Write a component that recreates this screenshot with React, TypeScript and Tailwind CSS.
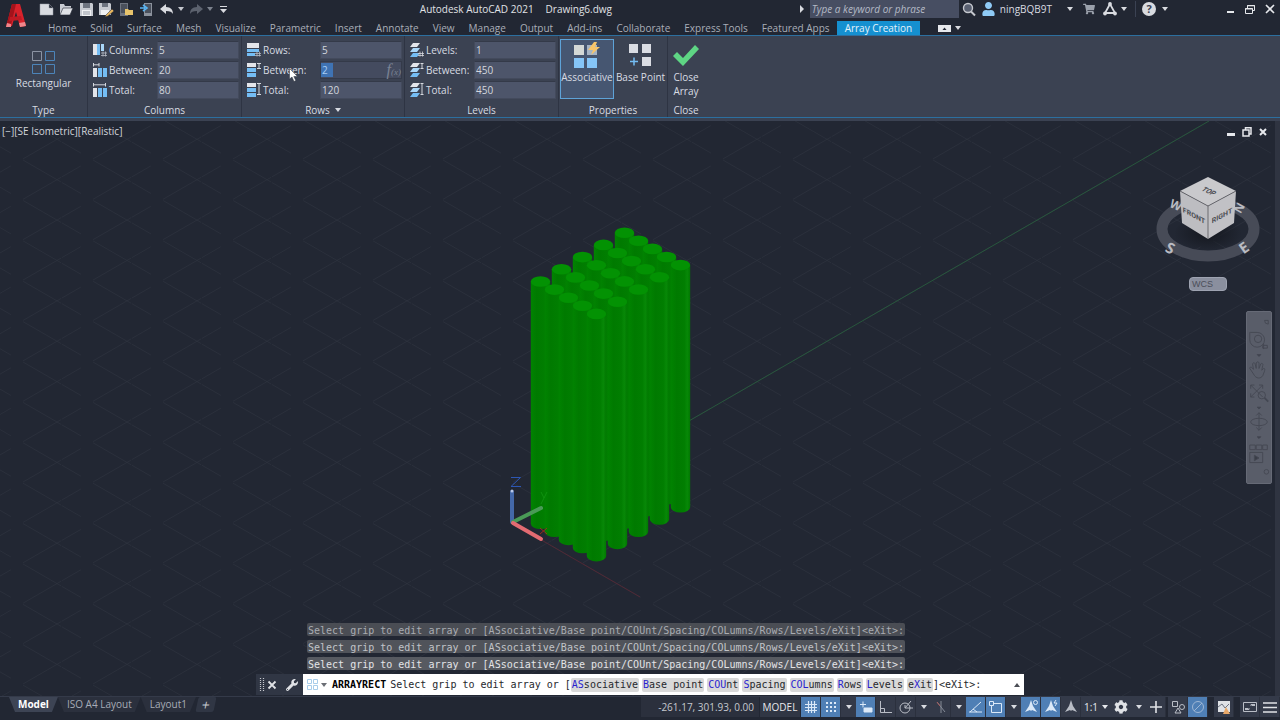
import React from 'react'
import { FaShoppingCart, FaUser, FaCog, FaWrench } from 'react-icons/fa'

const tabs = [
  'Home', 'Solid', 'Surface', 'Mesh', 'Visualize', 'Parametric', 'Insert', 'Annotate', 'View',
  'Manage', 'Output', 'Add-ins', 'Collaborate', 'Express Tools', 'Featured Apps',
]

const prompt = 'Select grip to edit array or [ASsociative/Base point/COUnt/Spacing/COLumns/Rows/Levels/eXit]<eXit>:'

const Caret = ({ className = '' }: { className?: string }) => (
  <svg viewBox="0 0 6 4" className={`h-1 w-1.5 shrink-0 ${className}`} fill="currentColor" aria-hidden="true">
    <path d="M0 0h6L3 4z" />
  </svg>
)

const Logo = () => (
  <svg viewBox="0 0 34 35" className="h-[35px] w-[34px] shrink-0" aria-hidden="true">
    <path d="M12 4h8l6 22-6 1-4-15-4 14-6 1z" fill="#d8222b" />
    <path d="M12 4h4l-5 21-5 2z" fill="#a3131b" />
    <path d="M10 17l11-1 1 4-13 1z" fill="#c01a24" />
    <path d="M6 27l1-4 4 1 0 3zM20 27l-1-4 6-1 1 4z" fill="#f0868b" />
  </svg>
)

/* quick access toolbar */

const QuickAccess = () => {
  const items = [
    {
      name: 'New',
      icon: <path d="M1 3h9l4 4v7H1z M10 3v4h4" fill="#d9dbe0" stroke="#9a9fa9" strokeWidth=".5" />,
    },
    {
      name: 'Open',
      icon: (
        <>
          <path d="M1 14V3h4l1 2h6v2" fill="#c9ccd3" />
          <path d="M4 7h10l-3 7H1z" fill="#e0e2e6" stroke="#222733" strokeWidth=".6" />
        </>
      ),
    },
    {
      name: 'Save',
      icon: (
        <>
          <path d="M1 2h12l1 1v12H1z" fill="#c6c9d0" />
          <path d="M4 2h7v5H4z" fill="#6e7480" />
          <path d="M3 9h9v6H3z" fill="#f0f1f3" />
          <path d="M4 11h7M4 13h7" stroke="#9399a4" />
        </>
      ),
    },
    {
      name: 'Save As',
      icon: (
        <>
          <path d="M0 2h11l1 1v11H0z" fill="#c6c9d0" />
          <path d="M3 2h6v4H3z" fill="#6e7480" />
          <path d="M2 9h8v5H2z" fill="#f0f1f3" />
          <path d="M7 14l6-6 2 2-6 5-3 1z" fill="#e8b75e" stroke="#222733" strokeWidth=".5" />
        </>
      ),
    },
    {
      name: 'Open from Web & Mobile',
      icon: (
        <>
          <path d="M1 2h8v13H1z" fill="#6e7480" />
          <path d="M2 3h6v9H2z" fill="#4a505c" />
          <path d="M6 8h3l1 1h4v5H6z" fill="#e8c46c" />
        </>
      ),
    },
    {
      name: 'Save to Web & Mobile',
      icon: (
        <>
          <path d="M5 2h8v13H5z" fill="#8b919c" />
          <path d="M6 3h6v9H6z" fill="#4a505c" />
          <path d="M1 7h5M4 4l4 3-4 3" fill="none" stroke="#5ab4f2" strokeWidth="1.600" />
        </>
      ),
    },
  ]
  return (
    <div className="flex items-center">
      <div className="flex gap-1">
        {items.map((item) => (
          <button key={item.name} type="button" aria-label={item.name} className="w-4">
            <svg viewBox="0 0 16 17" className="h-[17px] w-4">{item.icon}</svg>
          </button>
        ))}
      </div>
      <button type="button" aria-label="Undo" className="ml-1 w-4 text-[#d9dbe0]">
        <svg viewBox="0 0 16 17" className="h-[17px] w-4" fill="currentColor">
          <path d="M1 8l6-5v3c5 0 7 3 7 7-1-2-3-3-7-3v3z" />
        </svg>
      </button>
      <Caret className="ml-[3px] text-[#c5c8ce]" />
      <button type="button" aria-label="Redo" className="ml-1 w-4 text-[#5c626e]">
        <svg viewBox="0 0 16 17" className="h-[17px] w-4" fill="currentColor">
          <path d="M15 8L9 3v3C4 6 2 9 2 13c1-2 3-3 7-3v3z" />
        </svg>
      </button>
      <Caret className="ml-[3px] text-[#7d838e]" />
      <button type="button" aria-label="Customize" className="ml-[3px] w-4 text-[#d9dbe0]">
        <svg viewBox="0 0 16 17" className="h-[17px] w-4" fill="currentColor">
          <path d="M4 5h7v1H4zM4 8h7l-3.500 4z" />
        </svg>
      </button>
    </div>
  )
}

const InfoCenter = () => (
  <div className="flex items-center text-[#d9dbe0]">
    <svg viewBox="0 0 4 8" className="mr-1.5 h-2 w-1" fill="currentColor" aria-hidden="true">
      <path d="M0 0l4 4-4 4z" />
    </svg>
    <input
      type="text"
      aria-label="Search"
      placeholder="Type a keyword or phrase"
      className="h-[18px] w-[149px] bg-[#474e62] px-0.5 text-[10px] italic placeholder:text-[#b4bac6]"
    />
    <button type="button" aria-label="Find" className="ml-[3px] w-4">
      <svg viewBox="0 0 16 16" className="size-4" fill="none" stroke="#c5c8ce">
        <circle cx="6" cy="7" r="4.500" strokeWidth="1.400" fill="#596071" />
        <path d="M9 10.500l4 4" strokeWidth="2" />
      </svg>
    </button>
    <a href="#" className="ml-1 flex items-center gap-[5px] text-[10px]">
      <FaUser className="h-3.5 w-[13px] text-[#8fcaf5]" aria-hidden="true" />
      ningBQB9T
    </a>
    <Caret className="ml-[15px]" />
    <FaShoppingCart className="ml-[10px] size-3 text-[#9aa0ab]" aria-hidden="true" />
    <svg viewBox="0 0 14 14" className="ml-2 size-3.5" fill="none" stroke="currentColor" strokeWidth="1.800" aria-hidden="true">
      <path d="M7 2L2 11h10z" />
      <circle cx="7" cy="2" r="1" />
      <circle cx="2" cy="11.500" r="1" />
      <circle cx="12" cy="11.500" r="1" />
    </svg>
    <Caret className="ml-1" />
    <span className="mr-1.5 ml-2 h-4 w-px bg-[#3b4253]" />
    <button
      type="button"
      aria-label="Help"
      className="size-3.5 rounded-full bg-[#d9dbe0] text-center text-[11px] leading-[14px] font-bold text-[#3b4253]"
    >
      ?
    </button>
    <Caret className="ml-1.5" />
  </div>
)

const WindowButtons = () => (
  <div className="ml-[52px] flex items-center text-[#e6e8ec]">
    <button type="button" aria-label="Minimize" className="flex w-5 justify-center">
      <svg viewBox="0 0 12 12" className="size-3" fill="currentColor"><path d="M3 8h7v2H3z" /></svg>
    </button>
    <button type="button" aria-label="Restore" className="flex w-5 justify-center">
      <svg viewBox="0 0 12 12" className="size-3" fill="none" stroke="currentColor">
        <path d="M1.500 5.500h7v5h-7zM3.500 5V2.500h7v5H9M3 2.800h8M1 6h8" />
      </svg>
    </button>
    <button type="button" aria-label="Close" className="flex w-5 justify-center">
      <svg viewBox="0 0 12 12" className="size-3" fill="none" stroke="currentColor" strokeWidth="1.600">
        <path d="M2 2l8 8M10 2l-8 8" />
      </svg>
    </button>
  </div>
)

/* ribbon */

type IconKind = 'count' | 'between' | 'total'

const ColumnIcon = ({ kind }: { kind: IconKind }) => (
  <svg viewBox="0 0 14 14" className="size-3.5" aria-hidden="true">
    {kind === 'count' ? (
      <>
        <path d="M0 1h4v11H0z" fill="#e3e5ea" />
        <path d="M4 1h3v11H4z" fill="#74bdf4" />
        <path d="M8 1h3v7H8z" fill="#a9d6f8" />
        <path d="M8 10h6M8 12.500h6M10 8.500v5M12.500 8.500v5" stroke="#b5bac4" strokeWidth=".8" />
      </>
    ) : (
      <>
        <path d="M0 5h4v9H0z" fill="#e3e5ea" />
        <path d="M5 5h4v9H5zM10 5h4v9h-4z" fill="#74bdf4" />
        <path
          d={kind === 'between' ? 'M.5 0v3.500M6 0v3.500M1 1.800h5' : 'M.5 0v3.500M12.500 0v3.500M1 1.800h11'}
          stroke="#d5d8de"
          fill="none"
        />
      </>
    )}
  </svg>
)

const RowIcon = ({ kind }: { kind: IconKind }) => (
  <svg viewBox="0 0 14 14" className="size-3.5" aria-hidden="true">
    {kind === 'count' ? (
      <>
        <path d="M0 0h12v5H0z" fill="#e3e5ea" />
        <path d="M0 6h12v3H0zM0 10h8v3H0z" fill="#74bdf4" />
        <path d="M8 10.500h6M8 12.500h6M10 8.500v5M12.500 8.500v5" stroke="#b5bac4" strokeWidth=".8" />
      </>
    ) : (
      <>
        <path d="M0 0h9v4H0z" fill="#e3e5ea" />
        <path d="M0 5h9v4H0zM0 10h9v4H0z" fill="#74bdf4" />
        <path
          d={kind === 'between' ? 'M10 .5h4M10 5.500h4M12 .5v5' : 'M10 .5h4M10 11.500h4M12 .5v11'}
          stroke="#d5d8de"
          fill="none"
        />
      </>
    )}
  </svg>
)

const LevelIcon = ({ kind }: { kind: IconKind }) => (
  <svg viewBox="0 0 14 14" className="size-3.5" aria-hidden="true">
    <path d="M3 0h7L7 4H0z" fill="#e3e5ea" />
    <path d="M3 5h7L7 9H0z" fill="#a9d6f8" />
    <path d="M3 10h7l-3 4H0z" fill="#74bdf4" />
    {kind === 'count' && (
      <path d="M8 10.500h6M8 12.500h6M10 8.500v5M12.500 8.500v5" stroke="#d5d8de" strokeWidth=".8" />
    )}
    {kind === 'between' && <path d="M10.500 .5h3M10.500 5.500h3M12 .5v5" stroke="#d5d8de" />}
    {kind === 'total' && <path d="M10.500 .5h3M10.500 11.500h3M12 .5v11" stroke="#d5d8de" />}
  </svg>
)

const Panel = ({ title, children, className = '' }: { title: React.ReactNode; children: React.ReactNode; className?: string }) => (
  <section className={`flex flex-col border-r border-[#2e3443] ${className}`}>
    <div className="flex flex-1">{children}</div>
    <h2 className="flex h-3.5 items-center justify-center gap-1">{title}</h2>
  </section>
)

const inputStyle = 'h-[18px] w-[82px] border border-[#434a5c] border-t-[#343a49] bg-[#4d556a] px-px text-[10px] text-[#d3d7de]'

type Field = { label: string; value: string; icon: React.ReactNode }

const Fields = ({ id, fields, labelWidth = 'w-[50px]' }: { id: string; fields: Field[]; labelWidth?: string }) => (
  <div className="flex flex-col gap-0.5 pt-[5px] pr-0.5 pl-[5px]">
    {fields.map((field, i) => {
      const name = `${id}-${i}`
      const active = id === 'rows' && i === 1
      return (
        <div key={name} className="flex items-center">
          {field.icon}
          <label htmlFor={name} className={`pl-0.5 whitespace-nowrap ${labelWidth}`}>{field.label}</label>
          {active ? (
            <div className="flex h-[18px] w-[82px] items-center border border-[#343a49] bg-[#444b5f]">
              <input id={name} defaultValue={field.value} className="h-3.5 w-3 bg-[#3f73b3] px-px text-[10px] text-[#a9cdf5]" />
              <span className="ml-auto font-['Liberation_Serif',serif] text-[16px] leading-none text-[#7b8394] italic">
                f<span className="text-[9px]">(x)</span>
              </span>
            </div>
          ) : (
            <input id={name} defaultValue={field.value} className={inputStyle} />
          )}
        </div>
      )
    })}
  </div>
)

const kinds: IconKind[] = ['count', 'between', 'total']

const Ribbon = () => (
  <div className="flex h-[81px] bg-[#3b4252] text-[10px] text-[#d8dce3]">
    <Panel title="Type" className="w-[88px]">
      <button type="button" className="flex flex-1 flex-col items-center pt-3.5">
        <svg viewBox="0 0 26 26" className="size-[26px]" fill="none" strokeWidth="1">
          <path d="M1.500 1.500h9v9h-9z" stroke="#8b93a3" />
          <path d="M14.500 1.500h9v9h-9zM1.500 14.500h9v9h-9zM14.500 14.500h9v9h-9z" stroke="#4c84b9" />
        </svg>
        Rectangular
      </button>
    </Panel>
    <Panel title="Columns">
      <Fields
        id="columns"
        fields={['Columns:', 'Between:', 'Total:'].map((label, i) => ({
          label, value: ['5', '20', '80'][i], icon: <ColumnIcon kind={kinds[i]} />,
        }))}
      />
    </Panel>
    <Panel title={<>Rows <Caret className="ml-px" /></>}>
      <Fields
        id="rows"
        labelWidth="w-[59px]"
        fields={['Rows:', 'Between:', 'Total:'].map((label, i) => ({
          label, value: ['5', '2', '120'][i], icon: <RowIcon kind={kinds[i]} />,
        }))}
      />
    </Panel>
    <Panel title="Levels">
      <Fields
        id="levels"
        fields={['Levels:', 'Between:', 'Total:'].map((label, i) => ({
          label, value: ['1', '450', '450'][i], icon: <LevelIcon kind={kinds[i]} />,
        }))}
      />
    </Panel>
    <Panel title="Properties" className="w-[109px]">
      <button
        type="button"
        className="mt-[3px] ml-px flex h-[60px] w-[54px] flex-col items-center border border-[#5ea3d8] bg-[#465671] pt-0.5"
      >
        <svg viewBox="0 0 28 28" className="size-7" aria-hidden="true">
          <path d="M1 3h10v10H1z" fill="#d3d8d6" />
          <path d="M14 3h10v10H14z" fill="#a6b4c4" />
          <path d="M1 16h10v10H1zM14 16h10v10H14z" fill="#85c5f8" />
          <path d="M21 0l-6 8h5l-2 5 9-8h-5l2-5z" fill="#f8c569" />
        </svg>
        Associative
      </button>
      <button type="button" className="mt-[3px] flex flex-1 flex-col items-center pt-[3px]">
        <svg viewBox="0 0 28 28" className="size-7" aria-hidden="true">
          <path d="M2 2h9v9H2zM15 2h9v9h-9zM15 15h9v9h-9z" fill="#dadce3" />
          <path d="M3 19.500h8M7 15.500v8" stroke="#74bdf4" strokeWidth="1.500" />
        </svg>
        <span className="whitespace-nowrap">Base Point</span>
      </button>
    </Panel>
    <Panel title="Close" className="w-9 border-r-0">
      <button type="button" className="mt-1.5 flex flex-1 flex-col items-center">
        <svg viewBox="0 0 28 28" className="size-7" aria-hidden="true">
          <path d="M1 14l4-4 6 6L23 3l4 4-16 17z" fill="#5ed584" />
        </svg>
        <span className="leading-[14px]">Close Array</span>
      </button>
    </Panel>
  </div>
)

/* model space */

const gridLines = Array.from({ length: 50 }, (_, i) => i - 25)

const rods = [4, 3, 2, 1, 0].flatMap((b) =>
  [0, 1, 2, 3, 4].map((a) => ({ x: 540.5 + a * 14 + b * 21, y: 281.5 + a * 8.1 - b * 12.2 })),
)

const Scene = () => (
  <svg
    viewBox="0 121 1280 575"
    preserveAspectRatio="xMidYMid slice"
    className="absolute inset-0 h-full w-full"
    role="img"
    aria-label="Array of cylinders"
  >
    <defs>
      <linearGradient id="rod">
        <stop offset="0" stopColor="#018301" />
        <stop offset=".3" stopColor="#007a00" />
        <stop offset=".7" stopColor="#017e01" />
        <stop offset=".85" stopColor="#078807" />
        <stop offset="1" stopColor="#017801" />
      </linearGradient>
    </defs>
    <g stroke="#303641" strokeWidth=".6" strokeDasharray="22 14 44 0.8">
      {gridLines.map((k) => (
        <React.Fragment key={k}>
          <path d={`M${512 + k * 70 - 800} ${523 - 461.6}l1600 923.200`} />
          <path d={`M${512 + k * 70 - 800} ${523 + 461.6}l1600 -923.200`} />
        </React.Fragment>
      ))}
    </g>
    <path d="M512 523L1209 121" stroke="#28573d" strokeWidth="1" />
    <path d="M512 523L640 597" stroke="#5a2733" strokeWidth=".8" />
    {rods.map((rod) => (
      <g key={`${rod.x}-${rod.y}`}>
        <path d={`M${rod.x - 9.7} ${rod.y}v242a9.700 5.500 0 0 0 19.400 0v-242z`} fill="url(#rod)" />
        <ellipse cx={rod.x} cy={rod.y} rx="9.700" ry="5.300" fill="#039203" />
      </g>
    ))}
    <g strokeLinecap="round" strokeWidth="4">
      <path d="M512 522v-30" stroke="#4468a8" />
      <path d="M513 522l28-14" stroke="#4a9a57" />
      <path d="M513 523l28 16" stroke="#e36b72" />
    </g>
    <circle cx="512" cy="491" r="1.500" fill="#b9c9ea" />
    <path d="M511 477.500h9.500l-9.500 9h10" stroke="#2d57b4" fill="none" />
    <path d="M541 492l3 6 3-6M544 498l-3 6" stroke="#159a15" fill="none" strokeWidth=".7" />
    <path d="M540 528l7 6M547 528l-7 6" stroke="#a03018" fill="none" strokeWidth=".9" />
  </svg>
)

const ViewCube = () => (
  <svg viewBox="0 0 120 90" className="h-[90px] w-[120px]" role="img" aria-label="View cube">
    <defs>
      <radialGradient id="cubeShadow">
        <stop offset="0" stopColor="#14171e" />
        <stop offset="1" stopColor="#14171e" stopOpacity="0" />
      </radialGradient>
    </defs>
    <ellipse cx="60" cy="54" rx="46" ry="27" fill="none" stroke="#474b57" strokeWidth="11" />
    <ellipse cx="60" cy="58" rx="34" ry="18" fill="url(#cubeShadow)" />
    <g fontFamily="Open Sans, sans-serif" fontWeight="700" fill="#b9bbc2" textAnchor="middle">
      <text transform="translate(26 34) rotate(25)" fontSize="12">W</text>
      <text transform="translate(95 35) rotate(-60)" fontSize="12">N</text>
      <text transform="translate(20 78) rotate(25)" fontSize="15">S</text>
      <text transform="translate(99 77) rotate(-35)" fontSize="15">E</text>
    </g>
    <path d="M60 2l28 14-28 15-28-15z" fill="#c9c9cc" />
    <path d="M32 16l28 15v33L34 48z" fill="#bdbdc1" />
    <path d="M88 16L60 31v33l26-16z" fill="#c1c1c5" />
    <path d="M32 16l28 15 28-15M60 31v33" stroke="#55565c" strokeWidth=".8" fill="none" />
    <g fontFamily="Roboto, sans-serif" fontWeight="700" fontSize="7" fill="#4b4c52" textAnchor="middle">
      <text transform="translate(46 43) skewY(28)">FRONT</text>
      <text transform="translate(74 43) skewY(-28)">RIGHT</text>
      <text transform="translate(59 18) rotate(24) skewX(-25)">TOP</text>
    </g>
  </svg>
)

const NavBar = () => (
  <nav
    aria-label="Navigation bar"
    className="absolute top-[190px] right-2 h-[173px] w-[26px] rounded-xs border border-[#666a76] bg-[#595d69]"
  >
    <svg viewBox="0 0 26 173" className="h-full w-full" fill="none" stroke="#444853">
      <path d="M19 3l4 0 0 4-3-1z" />
      <path d="M4 16h7a8 8 0 1 1-8 8v-8z" />
      <circle cx="12" cy="23" r="4" />
      <path d="M17 30h5v3h-5zM18 28v6" />
      <path d="M11 40l4 0-2 2z" fill="#3a3e48" />
      <path d="M7 61l-4-6c0-2 2-2 4 1l-1-6c1-2 3-1 3 1l1 4 0-6c1-2 3-1 3 0v6l2-5c1-1 3 0 2 2l-1 5 2-2c2 0 1 2 1 3l-2 5c-2 3-7 4-10-2z" />
      <path d="M4 73l13 13M17 73L4 86M4 77v-4h4M13 73h4v4M4 82v4h4" />
      <circle cx="16" cy="84" r="4" />
      <path d="M19 87l4 4" strokeWidth="2" />
      <path d="M11 97l4 0-2 2z" fill="#3a3e48" />
      <path d="M13 103v19M10 106l3-3 3 3M10 119l3 3 3-3" />
      <ellipse cx="13" cy="113" rx="9" ry="4" />
      <path d="M11 129l4 0-2 2z" fill="#3a3e48" />
      <path d="M3 138h6v5H3zM10 138h6v5h-6zM17 138h5v5h-5zM3 146h14v11H3z" />
      <path d="M8 149l5 3-5 3z" fill="#3a3e48" />
      <circle cx="21" cy="167" r="2.500" />
    </svg>
  </nav>
)

const options = [
  ['', 'AS', 'sociative'],
  ['', 'B', 'ase point'],
  ['', 'COU', 'nt'],
  ['', 'S', 'pacing'],
  ['', 'COL', 'umns'],
  ['', 'R', 'ows'],
  ['', 'L', 'evels'],
  ['e', 'X', 'it'],
]

const CommandLine = () => (
  <div className="absolute right-64 bottom-px left-64 font-['DejaVu_Sans_Mono',monospace] text-[10px]">
    <div className="ml-[51px] flex flex-col items-start gap-1 pb-1">
      {['bg-[#4a4d54] text-[#a9acb2]', 'bg-[#50535a] text-[#c1c3c8]', 'bg-[#575a61] text-[#e3e4e7]'].map((tone) => (
        <p key={tone} className={`h-[13px] rounded-xs px-px leading-[15px] whitespace-pre ${tone}`}>{prompt}</p>
      ))}
    </div>
    <div className="flex h-[21px]">
      <div className="flex w-[47px] shrink-0 items-center bg-[#303644] text-[#e0e2e6]">
        <svg viewBox="0 0 6 14" className="ml-[3px] h-3.5 w-1.5" aria-hidden="true">
          <path d="M1.500 0v14M4.500 0v14" stroke="#c5c8ce" strokeDasharray="1 1" strokeWidth="1.200" />
        </svg>
        <button type="button" aria-label="Close command line" className="ml-0.5">
          <svg viewBox="0 0 10 10" className="size-2.5" stroke="currentColor" strokeWidth="1.800"><path d="M1.500 1.500l7 7M8.500 1.500l-7 7" /></svg>
        </button>
        <button type="button" aria-label="Customize" className="ml-2">
          <FaWrench className="size-3.5 p-px" aria-hidden="true" />
        </button>
      </div>
      <div className="flex flex-1 items-center bg-white text-[#26282d]">
        <svg viewBox="0 0 12 12" className="ml-1 size-3" fill="none" stroke="#a7cdea" aria-hidden="true">
          <path d="M.5 .5h4v4h-4zM6.500 .5h4v4h-4zM.5 6.500h4v4h-4zM6.500 6.500h4v4h-4z" />
        </svg>
        <Caret className="ml-0.5 text-[#6b6e75]" />
        <span className="ml-[5px] font-bold text-black">ARRAYRECT</span>
        <span className="ml-1 whitespace-pre">Select grip to edit array or [</span>
        <div className="flex gap-[3px]">
          {options.map(([pre, key, rest]) => (
            <button key={key} type="button" className="h-3.5 rounded-xs bg-[#d9d9d9] px-px leading-[14px] whitespace-pre">
              {pre}<span className="text-[#2a1fd0]">{key}</span>{rest}
            </button>
          ))}
        </div>
        <span>]&lt;eXit&gt;:</span>
        <Caret className="mr-1 ml-auto rotate-180 text-[#4b4e55]" />
      </div>
    </div>
  </div>
)

/* status bar */

const LayoutTab = ({ children, active = false }: { children: React.ReactNode; active?: boolean }) => (
  <button
    type="button"
    className={`h-[15px] px-[9px] leading-[15px] [clip-path:polygon(0_0,100%_0,calc(100%-6px)_100%,6px_100%)] ${
      active ? 'bg-[#3d4454] font-bold text-white' : 'bg-[#2b303d] text-[#a7acb7]'
    }`}
  >
    {children}
  </button>
)

const Tool = ({ label, on = false, children }: { label: string; on?: boolean; children: React.ReactNode }) => (
  <button
    type="button"
    aria-label={label}
    aria-pressed={on}
    className={`flex h-5 w-5 items-center justify-center border-r border-[#2b303d] ${on ? 'bg-[#4f7fb5] text-[#dbe9f8]' : 'bg-[#343a49] text-[#b9bdc6]'}`}
  >
    <svg viewBox="0 0 16 16" className="size-4" fill="none" stroke="currentColor">{children}</svg>
  </button>
)

const Drop = ({ label }: { label: string }) => (
  <button type="button" aria-label={label} className="flex h-5 w-[15px] items-center justify-center bg-[#343a49] text-[#d9dbe0]">
    <Caret />
  </button>
)

const person = 'M8 1l2 6 4 6-5-2-1 1-1-1-5 2 4-6z'

const StatusBar = () => (
  <footer className="flex h-6 items-start border-t border-[#343a49] bg-[#222733] text-[10px]">
    <div className="flex pl-[9px]">
      <LayoutTab active>Model</LayoutTab>
      <LayoutTab>ISO A4 Layout</LayoutTab>
      <LayoutTab>Layout1</LayoutTab>
      <button type="button" aria-label="New layout" className="ml-px h-[15px] w-[18px] -skew-x-12 rounded-xs bg-[#303644] text-[14px] leading-[14px] text-[#c5c8ce]">+</button>
    </div>
    <div className="ml-auto flex">
      <output className="h-5 w-[118px] bg-[#2b303d] pr-[5px] text-right leading-5 text-[#c5c8ce]">-261.17, 301.93, 0.00</output>
      <button type="button" className="mr-px ml-px h-5 w-10 bg-[#303644] text-[#e6e8ec]">MODEL</button>
      <Tool label="Grid" on><path d="M5.500 2v12M8.500 2v12M11.500 2v12M2 5.500h12M2 8.500h12M2 11.500h12" strokeWidth="1.200" /></Tool>
      <Tool label="Snap" on><path d="M3 4h10M3 8h10M3 12h10" strokeDasharray="2 2" strokeWidth="2" /></Tool>
      <Drop label="Snap settings" />
      <Tool label="Dynamic input" on>
        <path d="M2 5.500h6M5 2.500v6" />
        <path d="M6 9h8v4H6z" fill="currentColor" />
      </Tool>
      <Tool label="Ortho"><path d="M2.500 2v11.500H14M2.500 9.500h4v4" /></Tool>
      <Tool label="Polar"><circle cx="7" cy="9" r="5" /><path d="M7 9h8M7 9l6-7M7 9V6" /></Tool>
      <Drop label="Polar settings" />
      <Tool label="Isometric"><path d="M8 2v12M4 3l4 5M12 13L8 8" stroke="#858b97" /><path d="M4 3l3 4" stroke="#a85b5b" /></Tool>
      <Drop label="Isometric settings" />
      <Tool label="Object snap tracking" on><path d="M1 13h13M2 13L13 3M5 10l4 3" /></Tool>
      <Tool label="Object snap" on><path d="M3.500 4.500h10v9h-10z" /><path d="M1.500 2.500h4v4h-4z" fill="#4f7fb5" /></Tool>
      <Drop label="Object snap settings" />
      <Tool label="Annotation visibility" on><path d={person} fill="currentColor" stroke="none" /><circle cx="12.500" cy="3.500" r="2" /></Tool>
      <Tool label="Auto scale" on><path d={person} fill="currentColor" stroke="none" /><path d="M13 1l-2 3h3l-2 3" /></Tool>
      <Tool label="Annotation"><path d={person} fill="currentColor" stroke="none" /></Tool>
      <button type="button" className="flex h-5 w-[30px] items-center justify-center gap-1 bg-[#343a49] text-[#e6e8ec]">
        1:1 <Caret />
      </button>
      <button type="button" aria-label="Workspace" className="flex h-5 w-5 items-center justify-center bg-[#343a49] text-[#e0e2e6]">
        <FaCog className="size-3.5" aria-hidden="true" />
      </button>
      <Drop label="Workspace settings" />
      <Tool label="Annotation monitor"><path d="M8 2v12M2 8h12" stroke="#e0e2e6" strokeWidth="1.600" /></Tool>
      <span className="w-0.5" />
      <Tool label="Isolate objects"><path d="M2.500 2.500h5v5h-5zM8 9l3 5H5z" /><circle cx="12" cy="8" r="2.500" /></Tool>
      <Tool label="Hardware acceleration" on><circle cx="8" cy="8" r="5.500" stroke="#9db6d4" /><path d="M4 12l8-8" stroke="#9db6d4" /></Tool>
      <span className="w-1.5" />
      <Tool label="Graphics performance">
        <path d="M2 2h12v11H2z" fill="#dfe1e5" stroke="none" />
        <path d="M2 8l4-3 3 4 4-4" stroke="#6b7280" />
        <path d="M10 8l4 7H7z" fill="#e9a868" stroke="none" />
      </Tool>
      <span className="w-1.5" />
      <Tool label="Clean screen"><path d="M1.500 3.500h13v9h-13zM9 7V5.500h3M4 10.500h3V9" /><path d="M10 5h3v2h-3zM3 9h3v2H3z" fill="currentColor" stroke="none" /></Tool>
      <Tool label="Customization"><path d="M1 4h14M1 8.500h14M1 13h14" stroke="#e0e2e6" strokeWidth="1.600" /></Tool>
    </div>
  </footer>
)

const App = () => {
  return (
    <div className="flex min-h-screen flex-col overflow-hidden bg-[#222733] font-['Open_Sans','Noto_Sans',sans-serif]">
      <header>
        <div className="flex border-b border-[#2c6f9f]">
          <Logo />
          <div className="min-w-0 flex-1">
            <div className="flex h-[18px] items-center">
              <div className="pl-[5px]"><QuickAccess /></div>
              <h1 className="flex flex-1 justify-center gap-3 text-[10px] text-[#e0e2e6]">
                <span>Autodesk AutoCAD 2021</span>
                <span>Drawing6.dwg</span>
              </h1>
              <InfoCenter />
              <WindowButtons />
            </div>
            <div className="flex h-[17px] items-end pl-[7px] text-[10px] text-[#a9aeb8]">
              {tabs.map((tab) => (
                <button key={tab} type="button" className="h-3.5 px-[7px] leading-[14px] whitespace-nowrap">{tab}</button>
              ))}
              <button type="button" className="h-3.5 bg-[#1590d0] px-2 leading-[14px] whitespace-nowrap text-[#e6f3fb]">
                Array Creation
              </button>
              <button type="button" aria-label="Minimize ribbon" className="ml-[18px] flex h-3.5 items-center gap-1 text-[#d9dbe0]">
                <svg viewBox="0 0 13 7" className="h-[7px] w-[13px]">
                  <path d="M0 0h13v7H0z" fill="#e6e8ec" />
                  <path d="M4.500 5l2-2.500 2 2.500z" fill="#222733" />
                </svg>
                <Caret />
              </button>
            </div>
          </div>
        </div>
        <div className="relative">
          <Ribbon />
          <svg viewBox="0 0 10 14" className="absolute top-8 left-[289px] h-3.5 w-2.5" aria-hidden="true">
            <path d="M.5 .5v10.500l2.500-2 2 4.500 1.800-1-2-4h3.700z" fill="#fff" stroke="#2b303d" strokeWidth=".5" />
          </svg>
        </div>
        <div className="h-1 border-t border-[#2c6f9f] bg-[#3b4252]" />
      </header>

      <main className="relative min-h-[560px] flex-1 overflow-hidden">
        <Scene />
        <p className="absolute top-[3px] left-0.5 text-[10px] leading-[14px] text-[#d3d6dc]">[−][SE Isometric][Realistic]</p>
        <div className="absolute top-[5px] right-[11px] flex gap-1 text-[#e6e8ec]">
          <svg viewBox="0 0 12 12" className="size-3" fill="currentColor"><path d="M2 7h8v3H2z" /></svg>
          <svg viewBox="0 0 12 12" className="size-3" fill="none" stroke="currentColor" strokeWidth="1.500"><path d="M2 4h6v6H2zM4.500 4V1.800H10V8H8" /></svg>
          <svg viewBox="0 0 12 12" className="size-3" stroke="currentColor" strokeWidth="2"><path d="M3 3l6 6M9 3l-6 6" /></svg>
        </div>
        <div className="absolute top-[54px] right-3 flex flex-col items-center gap-3">
          <ViewCube />
          <button type="button" className="h-3.5 w-[38px] rounded-sm border border-[#9ea3b1] bg-[#8a8f9e] pl-0.5 text-left font-['Liberation_Sans',sans-serif] text-[9px] leading-[12px] text-[#4a4e59]">
            WCS
          </button>
        </div>
        <NavBar />
        <div className="absolute inset-y-0 right-0 w-[5px] bg-[#2f3441]" />
        <CommandLine />
      </main>
      <StatusBar />
    </div>
  )
}

export default App
